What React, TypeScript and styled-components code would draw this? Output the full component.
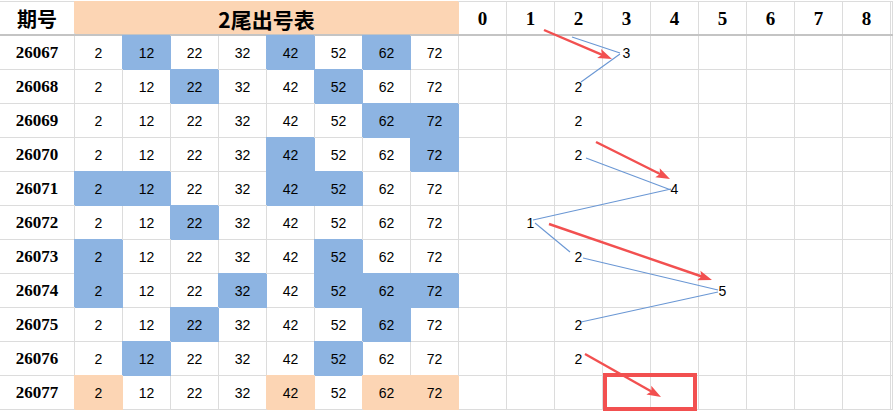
import React from "react";
import styled, { createGlobalStyle } from "styled-components";

const GRID = "#dcdcdc";
const BLUE = "#8db4e2";
const PEACH = "#fcd5b4";
const LINE = "#6a97d4";
const RED = "#f25050";

const GlobalStyle = createGlobalStyle`
  html, body {
    margin: 0;
    padding: 0;
    background: #fff;
  }
  body {
    font-family: "Liberation Sans", Arial, sans-serif;
    color: #000;
  }
`;

const Page = styled.div`
  position: relative;
  width: 893px;
  height: 412px;
  overflow: hidden;
  padding-top: 1px;
  box-sizing: border-box;
`;

const Sheet = styled.div`
  border-top: 1px solid ${GRID};
`;

const Row = styled.div<{ $head?: boolean }>`
  display: grid;
  grid-template-columns: 75px repeat(17, 48px) 1fr;
  height: 34px;
  border-bottom: ${(p) => (p.$head ? `2px solid #c4c4c4` : "none")};
  box-sizing: border-box;
`;

const Cell = styled.div<{ $fill?: string; $span?: number }>`
  display: flex;
  align-items: center;
  justify-content: center;
  box-sizing: border-box;
  border-right: 1px solid ${(p) => p.$fill || GRID};
  border-bottom: 1px solid ${(p) => p.$fill || GRID};
  background: ${(p) => p.$fill || "transparent"};
  box-shadow: ${(p) => (p.$fill ? `-1px -1px 0 0 ${p.$fill}` : "none")};
  grid-column: ${(p) => (p.$span ? `span ${p.$span}` : "auto")};
  font-size: 14px;
  padding-top: 1px;
`;

const HeadCell = styled(Cell)`
  border-bottom: none;
  font-family: "Noto Sans CJK SC", sans-serif;
  font-weight: 700;
  font-size: 20px;
  padding-top: 1px;
`;

const TitleCell = styled(HeadCell)`
  font-size: 21px;
`;

const DigitHead = styled(HeadCell)`
  font-family: "Liberation Serif", serif;
  font-size: 19px;
`;

const IdCell = styled(Cell)`
  font-family: "Liberation Serif", serif;
  font-weight: 700;
  font-size: 17px;
`;

const Overlay = styled.svg`
  position: absolute;
  left: 0;
  top: 0;
  pointer-events: none;
`;

const tails = [2, 12, 22, 32, 42, 52, 62, 72];

const rows: { id: string; fills: number[]; v: number | null; peach?: boolean }[] = [
  { id: "26067", fills: [1, 4, 6], v: 3 },
  { id: "26068", fills: [2, 5], v: 2 },
  { id: "26069", fills: [6, 7], v: 2 },
  { id: "26070", fills: [4, 7], v: 2 },
  { id: "26071", fills: [0, 1, 4, 5], v: 4 },
  { id: "26072", fills: [2], v: 1 },
  { id: "26073", fills: [0, 5], v: 2 },
  { id: "26074", fills: [0, 3, 5, 6, 7], v: 5 },
  { id: "26075", fills: [2, 6], v: 2 },
  { id: "26076", fills: [1, 5], v: 2 },
  { id: "26077", fills: [0, 4, 6, 7], v: null, peach: true },
];

const blueLines = [
  [572, 37, 620, 53],
  [620, 54, 581, 82],
  [586, 158, 671, 190],
  [671, 189, 533, 220],
  [535, 223, 570, 252],
  [583, 258, 718, 290],
  [718, 292, 581, 322],
];

const arrows = [
  [544, 30, 612, 59],
  [596, 142, 670, 179],
  [549, 224, 712, 280],
  [585, 354, 661, 397],
];

const Arrow = ({ a }: { a: number[] }) => {
  const [x1, y1, x2, y2] = a;
  const dx = x2 - x1;
  const dy = y2 - y1;
  const len = Math.hypot(dx, dy);
  const ux = dx / len;
  const uy = dy / len;
  const hl = 14;
  const hw = 5;
  const bx = x2 - ux * hl;
  const by = y2 - uy * hl;
  const pts = [
    [x2, y2],
    [bx - uy * hw, by + ux * hw],
    [bx + ux * 3, by + uy * 3],
    [bx + uy * hw, by - ux * hw],
  ]
    .map((p) => p.join(","))
    .join(" ");
  return (
    <g>
      <line x1={x1} y1={y1} x2={bx + ux * 4} y2={by + uy * 4} stroke={RED} strokeWidth={2.4} />
      <polygon points={pts} fill={RED} />
    </g>
  );
};

const App = () => {
  return (
    <Page>
      <GlobalStyle />
      <Sheet>
        <Row $head>
          <HeadCell>期号</HeadCell>
          <TitleCell $fill={PEACH} $span={8}>
            2尾出号表
          </TitleCell>
          {Array.from({ length: 9 }, (_, i) => (
            <DigitHead key={i}>{i}</DigitHead>
          ))}
          <HeadCell />
        </Row>
        {rows.map((r) => (
          <Row key={r.id}>
            <IdCell>{r.id}</IdCell>
            {tails.map((t, i) => (
              <Cell
                key={t}
                $fill={r.fills.includes(i) ? (r.peach ? PEACH : BLUE) : undefined}
              >
                {t}
              </Cell>
            ))}
            {Array.from({ length: 9 }, (_, d) => (
              <Cell key={d}>{r.v === d ? d : ""}</Cell>
            ))}
            <Cell />
          </Row>
        ))}
      </Sheet>
      <Overlay width={893} height={412}>
        {blueLines.map((l, i) => (
          <line key={i} x1={l[0]} y1={l[1]} x2={l[2]} y2={l[3]} stroke={LINE} strokeWidth={1.1} />
        ))}
        {arrows.map((a, i) => (
          <Arrow key={i} a={a} />
        ))}
        <rect x={605} y={375} width={90} height={34} fill="none" stroke={RED} strokeWidth={4} />
      </Overlay>
    </Page>
  );
};

export default App;
